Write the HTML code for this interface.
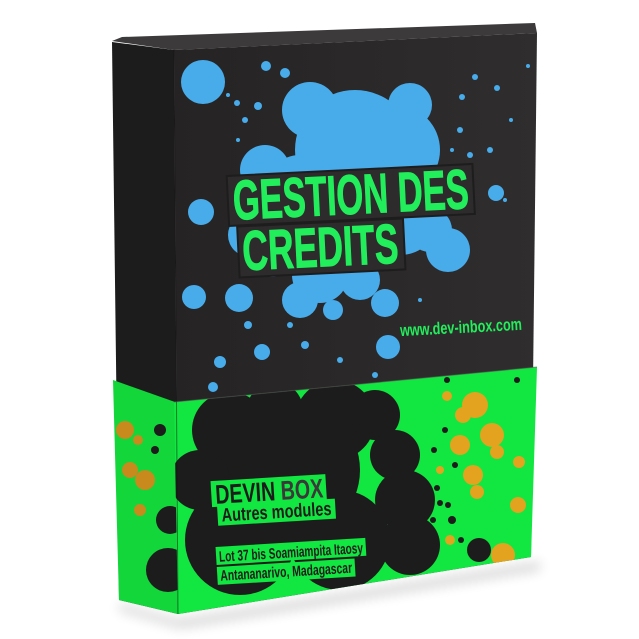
<!DOCTYPE html>
<html><head><meta charset="utf-8"><style>
html,body{margin:0;padding:0;background:#fff;width:639px;height:639px;overflow:hidden}
svg{display:block}
.t{font-family:"Liberation Sans Narrow","Liberation Sans",sans-serif;font-weight:bold}
</style></head><body>
<svg width="639" height="639" viewBox="0 0 639 639" xmlns="http://www.w3.org/2000/svg">
<defs>
<clipPath id="front"><polygon points="174,50 537,33 531,557 178,614"/></clipPath>
<clipPath id="fg"><polygon points="174,402 537,367 531,557 178,614"/></clipPath>
<clipPath id="sg"><polygon points="113,380 175,402 178,614 119,600"/></clipPath>
<linearGradient id="fgrad" x1="0" y1="0" x2="1" y2="0"><stop offset="0" stop-color="#252323"/><stop offset="1" stop-color="#2f2d2d"/></linearGradient>
<filter id="sh" x="-20%" y="-20%" width="140%" height="140%"><feGaussianBlur stdDeviation="6"/></filter>
</defs>
<polygon points="120,604 178,620 540,562 540,570 180,628 118,610" fill="#000" opacity="0.18" filter="url(#sh)"/>
<polygon points="112,41 122,37 535,23 537,33 174,50" fill="#3c3a3a"/>
<polygon points="112,42 174,50 178,614 119,600" fill="#1d1c1c"/>
<g clip-path="url(#sg)">
<rect x="100" y="370" width="90" height="250" fill="#12d63a"/>
<g fill="#c88a1c"><circle cx="125" cy="430" r="9"/><circle cx="130" cy="470" r="8"/><circle cx="138" cy="440" r="5"/><circle cx="145" cy="480" r="10"/><circle cx="140" cy="510" r="6"/></g>
<g fill="#1d1c1c"><circle cx="160" cy="430" r="6"/><circle cx="155" cy="450" r="4"/><circle cx="168" cy="570" r="22"/><circle cx="170" cy="520" r="14"/></g>
</g>
<polygon points="174,50 537,33 531,557 178,614" fill="url(#fgrad)"/>
<g clip-path="url(#front)" fill="#48aceb">
<circle cx="355" cy="150" r="60"/><circle cx="310" cy="110" r="28"/><circle cx="410" cy="105" r="22"/><circle cx="395" cy="150" r="45"/>
<circle cx="300" cy="190" r="35"/><circle cx="270" cy="245" r="32"/><circle cx="340" cy="230" r="55"/><circle cx="400" cy="215" r="40"/>
<circle cx="320" cy="275" r="28"/><circle cx="360" cy="280" r="20"/><circle cx="250" cy="235" r="22"/><circle cx="420" cy="185" r="25"/>
<circle cx="265" cy="170" r="25"/><circle cx="430" cy="230" r="22"/><circle cx="300" cy="300" r="18"/>
<circle cx="203" cy="82" r="22"/><circle cx="448" cy="250" r="22"/><circle cx="201" cy="212" r="13"/><circle cx="194" cy="297" r="12"/>
<circle cx="239" cy="298" r="14"/><circle cx="388" cy="347" r="12"/><circle cx="385" cy="303" r="14"/><circle cx="333" cy="310" r="10"/>
<circle cx="262" cy="352" r="8"/><circle cx="496" cy="193" r="8"/><circle cx="266" cy="66" r="5"/><circle cx="285" cy="73" r="5"/>
<circle cx="220" cy="362" r="6"/><circle cx="248" cy="325" r="4"/><circle cx="213" cy="387" r="5"/><circle cx="305" cy="345" r="4"/>
<circle cx="258" cy="106" r="4"/><circle cx="245" cy="120" r="3"/><circle cx="237" cy="103" r="3"/><circle cx="462" cy="97" r="3"/><circle cx="475" cy="77" r="3"/><circle cx="497" cy="88" r="3"/><circle cx="460" cy="130" r="3"/><circle cx="470" cy="155" r="3"/><circle cx="490" cy="150" r="3"/><circle cx="528" cy="66" r="2"/><circle cx="511" cy="120" r="2"/><circle cx="228" cy="95" r="2"/><circle cx="238" cy="140" r="2"/><circle cx="290" cy="325" r="3"/><circle cx="420" cy="300" r="2"/><circle cx="452" cy="150" r="2"/><circle cx="505" cy="200" r="2"/><circle cx="340" cy="360" r="3"/><circle cx="375" cy="375" r="3"/>
</g>
<g clip-path="url(#fg)">
<rect x="170" y="360" width="380" height="260" fill="#12e640"/>
<g fill="#e3a31e"><circle cx="475" cy="405" r="13"/><circle cx="463" cy="415" r="8"/><circle cx="492" cy="435" r="12"/><circle cx="460" cy="445" r="10"/><circle cx="497" cy="452" r="7"/><circle cx="473" cy="475" r="10"/><circle cx="477" cy="492" r="7"/><circle cx="518" cy="505" r="8"/><circle cx="519" cy="462" r="6"/><circle cx="503" cy="555" r="12"/><circle cx="450" cy="540" r="5"/><circle cx="440" cy="470" r="4"/><circle cx="447" cy="396" r="5"/></g>
<g fill="#1d1c1c"><circle cx="290" cy="470" r="70"/><circle cx="230" cy="430" r="38"/><circle cx="275" cy="410" r="28"/><circle cx="335" cy="420" r="40"/><circle cx="375" cy="415" r="25"/><circle cx="395" cy="455" r="25"/><circle cx="405" cy="500" r="30"/><circle cx="240" cy="540" r="55"/><circle cx="340" cy="540" r="50"/><circle cx="410" cy="545" r="30"/><circle cx="200" cy="480" r="30"/>
<circle cx="479" cy="550" r="12"/><circle cx="440" cy="503" r="3"/><circle cx="433" cy="520" r="3"/><circle cx="452" cy="520" r="4"/><circle cx="448" cy="505" r="3"/><circle cx="437" cy="488" r="3"/><circle cx="455" cy="465" r="3"/><circle cx="445" cy="430" r="3"/><circle cx="434" cy="450" r="3"/><circle cx="447" cy="380" r="3"/><circle cx="517" cy="380" r="3"/><circle cx="461" cy="540" r="3"/></g>
</g>
<g transform="rotate(-2.8 350 200)">
<rect x="228" y="170" width="246" height="50" fill="#2d2b2b" stroke="#1e1d1d" stroke-width="2"/>
<text x="233" y="214" class="t" font-size="56" fill="#22ee5c" stroke="#22ee5c" stroke-width="1" textLength="236" lengthAdjust="spacingAndGlyphs">GESTION DES</text>
<rect x="236" y="221" width="166" height="51" fill="#2d2b2b" stroke="#1e1d1d" stroke-width="2"/>
<text x="240" y="265" class="t" font-size="56" fill="#22ee5c" stroke="#22ee5c" stroke-width="1" textLength="156" lengthAdjust="spacingAndGlyphs">CREDITS</text>
</g>
<text x="400" y="333" class="t" font-size="17" fill="#22ee5c" transform="rotate(-3 460 328)" textLength="122" lengthAdjust="spacingAndGlyphs">www.dev-inbox.com</text>
<g transform="rotate(-3.5 280 520)">
<rect x="213" y="477" width="115" height="26" fill="#12e640"/>
<text x="217" y="500" class="t" font-size="27" fill="#1d1c1c" textLength="108" lengthAdjust="spacingAndGlyphs">DEVIN <tspan fill="#3a3838">BOX</tspan></text>
<rect x="218" y="502" width="118" height="20" fill="#12e640"/>
<text x="222" y="518" class="t" font-size="19" fill="#1d1c1c" textLength="110" lengthAdjust="spacingAndGlyphs">Autres modules</text>
<rect x="214" y="543" width="150" height="18" fill="#12e640"/>
<text x="217" y="558" class="t" font-size="15" fill="#1d1c1c" textLength="144" lengthAdjust="spacingAndGlyphs">Lot 37 bis Soamiampita Itaosy</text>
<rect x="214" y="563" width="138" height="18" fill="#12e640"/>
<text x="217" y="577" class="t" font-size="15" fill="#1d1c1c" textLength="132" lengthAdjust="spacingAndGlyphs">Antananarivo, Madagascar</text>
</g>
<line x1="174" y1="50" x2="178" y2="614" stroke="#111" stroke-width="1" opacity="0.5"/>
<line x1="174" y1="402" x2="537" y2="367" stroke="#555" stroke-width="1" opacity="0.6"/>
</svg>
</body></html>
